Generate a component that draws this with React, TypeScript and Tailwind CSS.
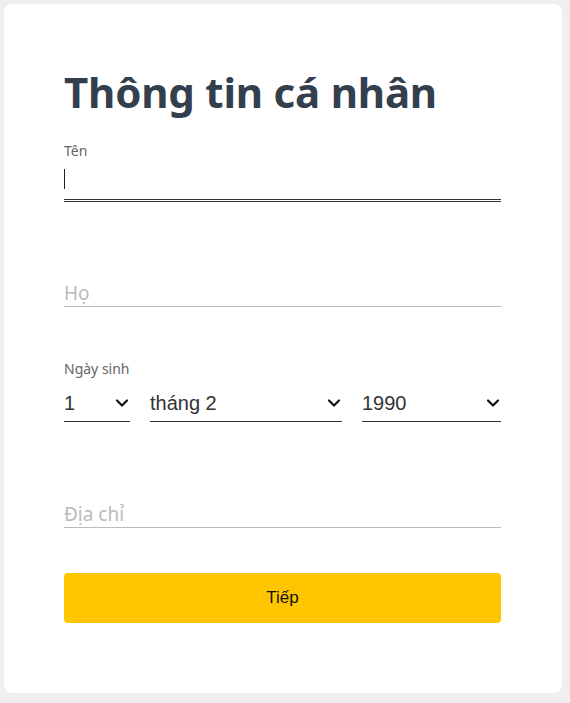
import { ChevronDown } from "lucide-react"

const segoe = "font-['Noto_Sans','Open_Sans',sans-serif]"
const arial = "font-['Liberation_Sans',Arial,sans-serif]"

const SelectBox = ({ value, className }: { value: string; className: string }) => (
  <div className={`flex h-[38px] items-center justify-between border-b border-[#333] ${className}`}>
    <span className={`${arial} text-[20px] text-[#333]`}>{value}</span>
    <ChevronDown size={20} strokeWidth={2.6} className="-mr-[2px] text-[#111]" />
  </div>
)

export default function App() {
  return (
    <div className="min-h-[703px] bg-[#efefef] pb-[10px] pl-1 pr-2 pt-1">
      <div className="h-[689px] rounded-lg bg-white pl-[60px] pr-[61px] pt-[67px]">
        <h1 className={`${segoe} text-[42px] font-bold leading-none tracking-[-0.2px] text-[#333f4d]`}>
          Thông tin cá nhân
        </h1>

        <div className="mt-[29px]">
          <label className={`${segoe} block text-[14px] leading-[18px] text-[#666]`}>Tên</label>
          <div className="mt-[8px] h-[33px] border-b-[3px] border-double border-[#333]">
            <div className="mt-[9px] h-[20px] w-px bg-[#222]" />
          </div>
        </div>

        <div className="mt-[77px] flex h-[28px] items-end border-b border-[#bbb] pb-[3px]">
          <span className={`${segoe} text-[19px] leading-none text-[#bbb]`}>Họ</span>
        </div>

        <div className="mt-[53px]">
          <label className={`${segoe} block text-[14px] leading-[18px] text-[#666]`}>Ngày sinh</label>
          <div className="mt-[6px] flex gap-5">
            <SelectBox value="1" className="w-[66px]" />
            <SelectBox value="tháng 2" className="w-[192px]" />
            <SelectBox value="1990" className="flex-1" />
          </div>
        </div>

        <div className="mt-[78px] flex h-[28px] items-end border-b border-[#bbb] pb-[3px]">
          <span className={`${segoe} text-[19px] leading-none text-[#bbb]`}>Địa chỉ</span>
        </div>

        <button
          className={`${arial} mt-[45px] flex h-[50px] w-full items-center justify-center rounded-sm bg-[#ffc600] text-[17px] text-[#111]`}
        >
          Tiếp
        </button>
      </div>
    </div>
  )
}
